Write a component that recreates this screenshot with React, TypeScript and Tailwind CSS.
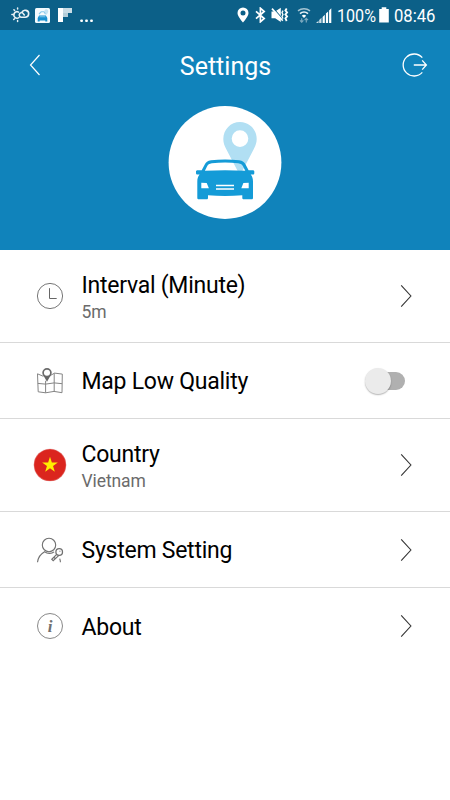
import type { ReactNode } from "react";

const StatusBar = () => {
  return (
    <div className="w-full h-[30px] bg-[#0c6088] text-white flex items-center justify-between pl-[11px] pr-[14px]">
      {/* notifications */}
      <div className="flex items-center">
        <svg width="19" height="16" viewBox="0 0 19 16" fill="none" stroke="#e8f1f5" strokeLinecap="round">
          <path d="M7.6 5.1A3.2 3.2 0 1 0 8 10.5" strokeWidth="1.5" />
          <path d="M6.6 1v.9M2.9 2.7l.7.7M.9 7.6h.9M2.7 12.5l.8-.8M6.6 14.5v-.9" strokeWidth="1.5" />
          <path d="M13.3 8C12 6 11 5.1 9.9 5.7a2.4 2.4 0 0 0 .1 4.6h4.2a3.5 3.5 0 1 0-3.3-4.7" strokeWidth="1.6" />
        </svg>
        <svg className="ml-[5px]" width="15" height="15" viewBox="0 0 15 15">
          <rect width="15" height="15" rx="1.5" fill="#f5fafd" />
          <path d="M9.5 2.3a2 2 0 0 1 3.8.8c0 1.3-1.7 3.8-1.7 3.8S9.2 4.4 9.5 2.3z" fill="#c5e4f4" />
          <path d="M4 6l2.2-2.2H9l1.5 2.4" fill="none" stroke="#86c8ea" strokeWidth="1.1" />
          <path d="M2.7 13.5V10l1.4-2.6h6.8l1.4 2.6v3.5h-2v-1H4.7v1z" fill="#168fd0" />
          <path d="M4.8 8.2h5.3l.7 1.1H4.1z" fill="#7cc4e8" />
        </svg>
        <svg className="ml-2" width="14" height="14" viewBox="0 0 14 14">
          <path d="M0 0h5v14H0z" fill="#fff" />
          <path d="M5 0h9v5H5z" fill="#c9dce5" />
          <path d="M5 5h5v4H5z" fill="#b5ced9" />
        </svg>
        <svg className="ml-2" width="14" height="14" viewBox="0 0 14 14" fill="#fff">
          <rect x="0.3" y="11.5" width="2.6" height="2.5" rx="0.8" />
          <rect x="5.2" y="11.5" width="2.6" height="2.5" rx="0.8" />
          <rect x="10.2" y="11.5" width="2.6" height="2.5" rx="0.8" />
        </svg>
      </div>
      {/* system */}
      <div className="flex items-center">
        <svg width="12" height="16" viewBox="0 0 12 16" fill="#fff">
          <path fillRule="evenodd" d="M6 .5A5.5 5.5 0 0 0 .5 6C.5 9.5 6 15.5 6 15.5S11.5 9.5 11.5 6A5.5 5.5 0 0 0 6 .5zM6 3.4a2.5 2.5 0 1 1 0 5 2.5 2.5 0 0 1 0-5z" />
        </svg>
        <svg className="ml-[6px]" width="11" height="16" viewBox="0 0 11 16" fill="none" stroke="#fff" strokeWidth="1.7">
          <path d="M1 4.3l8.2 7.2-3.8 3.3V1.2l3.8 3.3L1 11.7" />
        </svg>
        <svg className="ml-[5px]" width="18" height="16" viewBox="0 0 18 16" fill="none" stroke="#fff">
          <path d="M.5 4.5h3.7L9.8.7v14.2L4.2 11.3H.5z" fill="#fff" stroke="none" />
          <path d="M2.2 1.2l10.5 11.8" stroke="#0c6088" strokeWidth="1.1" />
          <path d="M1 1.6l10.8 12.2" strokeWidth="1.6" />
          <path d="M12 3.6l-1 2 1 2-1 2 1 2" strokeWidth="1.3" />
          <path d="M15.7 1.4l-1.3 2 1.7 2-1.7 2 1.7 2-1.7 2 1.3 2.6" strokeWidth="1.8" />
        </svg>
        <svg className="ml-[7px]" width="16" height="16" viewBox="0 0 16 16" fill="none" stroke="#e7f0f4">
          <path d="M2 3.9a9.5 9.5 0 0 1 12 0" strokeWidth="1.4" opacity="0.7" />
          <path d="M4 6.6a6.2 6.2 0 0 1 8 0" strokeWidth="1.7" />
          <path d="M5.8 8.7a3.3 3.3 0 0 1 4.4 0L8 11z" fill="#fff" stroke="none" />
          <path d="M5.7 15.3v-4M4 13.3l1.7 1.9 1.7-1.9M10.3 15.5v-4M8.6 13.2l1.7-1.8 1.7 1.8" strokeWidth="1.2" opacity="0.5" />
        </svg>
        <svg className="ml-1" width="16" height="15" viewBox="0 0 16 15" fill="#fff">
          <path d="M0 15l2.5-2.3V15zM3.2 15v-3l2.3-2.2V15z" opacity="0.8" />
          <path d="M6.6 15V8.9l2.2-2.1V15zM9.9 15V5.6l2.2-2.1V15zM13.1 15V2.4L15.3.3V15z" />
        </svg>
        <div className="w-[39px] ml-[5px]">
          <p className="w-max text-[18.5px] leading-[30px] origin-left scale-x-[0.87] translate-y-[0.5px]">100%</p>
        </div>
        <svg className="ml-[3px]" width="10" height="16" viewBox="0 0 10 16" fill="#fff">
          <path d="M2.7.2h4.6v1.7h2.5V15.5H.2V1.9h2.5z" />
        </svg>
        <div className="w-[42px] ml-[5px]">
          <p className="w-max text-[18.5px] leading-[30px] origin-left scale-x-[0.9] translate-y-[0.5px]">08:46</p>
        </div>
      </div>
    </div>
  );
};

const CarLogo = () => {
  return (
    <svg width="114" height="114" viewBox="0 -0.5 114 114">
      <circle cx="57" cy="57" r="56.4" fill="#fff" />
      {/* pin */}
      <path
        fillRule="evenodd"
        d="M72 16.6c-9.3 0-16.7 7.5-16.7 16.8 0 4 1.3 7 3 10.3L72 70l13.7-26.3c1.7-3.3 3-6.3 3-10.3 0-9.3-7.4-16.8-16.7-16.8zm0 8.2a8.3 8.3 0 1 1 0 16.6 8.3 8.3 0 0 1 0-16.6z"
        fill="#b1dff3"
      />
      {/* car */}
      <path
        fillRule="evenodd"
        d="M43 54.8c9-1.2 19.2-1.2 28.2 0 3.4.5 5.200 1.900 6.500 4.500l2.900 5.500h4.200c1 0 1.500.5 1.500 1.500v1.200c0 1-.5 1.600-1.500 1.600h-2.100c1.700 1.900 2.300 4.300 2.300 7.100v16c0 1-.5 1.500-1.500 1.500h-7.700c-1 0-1.500-.5-1.500-1.500v-2.400c-11.300.9-23 .9-34.300 0v2.400c0 1-.5 1.500-1.500 1.500h-7.700c-1 0-1.500-.5-1.500-1.500v-16c0-2.800.6-5.200 2.300-7.100h-2c-1 0-1.600-.6-1.600-1.600v-1.200c0-1 .6-1.500 1.600-1.500h4.100l2.900-5.500c1.300-2.600 3-4 6.400-4.500zm.9 2.900c-2.800.4-4 1.400-4.900 3.300l-2.100 4.300c12.900-.9 27.500-.9 40.400 0l-2.200-4.300c-.9-1.900-2.100-2.900-4.900-3.300-8.400-1.100-17.900-1.100-26.300 0z"
        fill="#149bd7"
      />
      <path d="M33.3 77.2l5.4.2 2.2 5.4h-7.6zM80.7 77.2l-5.3.2-2.1 5.4h7.4zM48 79.2h18v1.6H48zM48 82.7h18v1.6H48z" fill="#fff" />
    </svg>
  );
};

const ClockIcon = () => {
  return (
    <svg width="28" height="28" viewBox="0 0 28 28" fill="none" stroke="#777" strokeWidth="1">
      <circle cx="14" cy="14" r="12.6" />
      <path d="M13.5 6.2v10.3h7.2" stroke="#666" />
    </svg>
  );
};

const MapIcon = () => {
  return (
    <svg width="28" height="28" viewBox="0 0 28 28" fill="none" stroke="#858585" strokeWidth="1">
      <path d="M7.3 9.3L1.5 6.8l.7 18 7.4 1 8.4-1.4 8 1.3.3-18.6-7.7-1-4 2.3M9.6 13.8v12M18.2 6.2v18.2M1.8 16.4l7.8.7 8.6-1.2 7.9.8" />
      <circle cx="11" cy="5.8" r="3.9" fill="#fff" stroke="#6b6b6b" strokeWidth="1.7" />
      <path d="M7 7.8c2.2 2.5 5.8 2.5 8 0L11 14.8z" fill="#666" stroke="none" />
    </svg>
  );
};

const VietnamFlag = () => {
  return (
    <svg width="34" height="34" viewBox="0 0 34 34">
      <circle cx="17" cy="17" r="16.1" fill="#db251e" stroke="#e6aaa8" strokeWidth="0.4" />
      <path d="M17 8.7l1.85 5.7 6 .07-4.81 3.59 1.76 5.7L17 20.33l-4.8 3.43 1.76-5.7-4.81-3.59 6-.07z" fill="#ffef00" />
    </svg>
  );
};

const UserKeyIcon = () => {
  return (
    <svg width="28" height="28" viewBox="0 0 28 28" fill="none" stroke="#707070" strokeWidth="1.1">
      <circle cx="13" cy="9" r="6.7" />
      <path d="M1.5 26.2c.5-4.7 2.8-8.1 7.1-10.5 2.8 2.2 7 2.2 9.5.1M23.7 22.6c.5 1.2.7 2.3.7 3.6" />
      <circle cx="23.2" cy="16" r="3.3" strokeWidth="1.3" />
      <path d="M20.7 18.3l-4.9 5 1.4 1.4 5.7-5.3M18 21.4l1.2 1.1" strokeWidth="1.2" />
      <path d="M23.9 14.8l.1.8" />
    </svg>
  );
};

const InfoIcon = () => {
  return (
    <div className="w-[26px] h-[26px] rounded-full border border-[#888] flex items-center justify-center">
      <span className="font-['Liberation_Serif',serif] italic font-bold text-[17px] leading-none text-[#707070]">i</span>
    </div>
  );
};

const Chevron = () => {
  return (
    <svg className="shrink-0" width="14" height="24" viewBox="0 0 14 24" fill="none" stroke="#333" strokeWidth="1.1">
      <path d="M2.2 1.3L11.9 12 2.2 22.7" />
    </svg>
  );
};

const Toggle = () => {
  return (
    <div className="w-[40px] h-[26px] flex items-center">
      <div className="w-[26px] h-[26px] shrink-0 z-10 rounded-full bg-[#ebebeb] shadow-[0_1px_1.5px_rgba(0,0,0,0.3)]"></div>
      <div className="w-[28px] h-[18px] shrink-0 -ml-[14px] rounded-full bg-[#b0b0b0]"></div>
    </div>
  );
};

type RowProps = {
  icon: ReactNode;
  title: string;
  value?: string;
  action?: ReactNode;
  last?: boolean;
};

const Row = ({ icon, title, value, action = <Chevron />, last }: RowProps) => {
  return (
    <div className={`${value ? "h-[93px]" : "h-[76px]"} ${last ? "" : "border-b border-[#d9d9d9]"} w-full flex items-center pl-[33px] pr-[37px]`}>
      <div className="w-[34px] shrink-0 flex items-center justify-center">{icon}</div>
      <div className={`${value ? "pt-[4px]" : "pt-[3px]"} flex-1 pl-[14.5px]`}>
        <p className="text-[23px] leading-[28px] tracking-[-0.25px] text-black">{title}</p>
        {value && <p className="text-[17.5px] leading-[25px] tracking-[-0.1px] text-[#6b6b6b]">{value}</p>}
      </div>
      {action}
    </div>
  );
};

const App = () => {
  return (
    <div className="w-full min-h-dvh bg-white font-[Roboto,sans-serif] flex flex-col">
      <StatusBar />
      {/* header */}
      <div className="w-full h-[220px] bg-[#1083bb] text-white flex flex-col items-center">
        <div className="w-full h-[70px] flex items-center justify-between pl-[29px] pr-[22px]">
          <svg width="12" height="22" viewBox="0 0 12 22" fill="none" stroke="#fff" strokeWidth="1.2">
            <path d="M10.5 1L1.5 11l9 10" />
          </svg>
          <h1 className="text-[25px] leading-[30px] pl-[8px] pt-[3px]">Settings</h1>
          <svg width="26" height="24" viewBox="0 0 26 24" fill="none" stroke="#fff" strokeWidth="1.3">
            <path d="M20.3 4.6a11 11 0 1 0 0 14.8M11.8 12h12.5M20.2 7.4l4.2 4.6-4.2 4.6" />
          </svg>
        </div>
        <div className="mt-[5px]">
          <CarLogo />
        </div>
      </div>
      {/* settings */}
      <Row icon={<ClockIcon />} title="Interval (Minute)" value="5m" />
      <Row icon={<MapIcon />} title="Map Low Quality" action={<div className="mr-[8px]"><Toggle /></div>} />
      <Row icon={<VietnamFlag />} title="Country" value="Vietnam" />
      <Row icon={<UserKeyIcon />} title="System Setting" />
      <Row icon={<InfoIcon />} title="About" last />
    </div>
  );
};

export default App;
